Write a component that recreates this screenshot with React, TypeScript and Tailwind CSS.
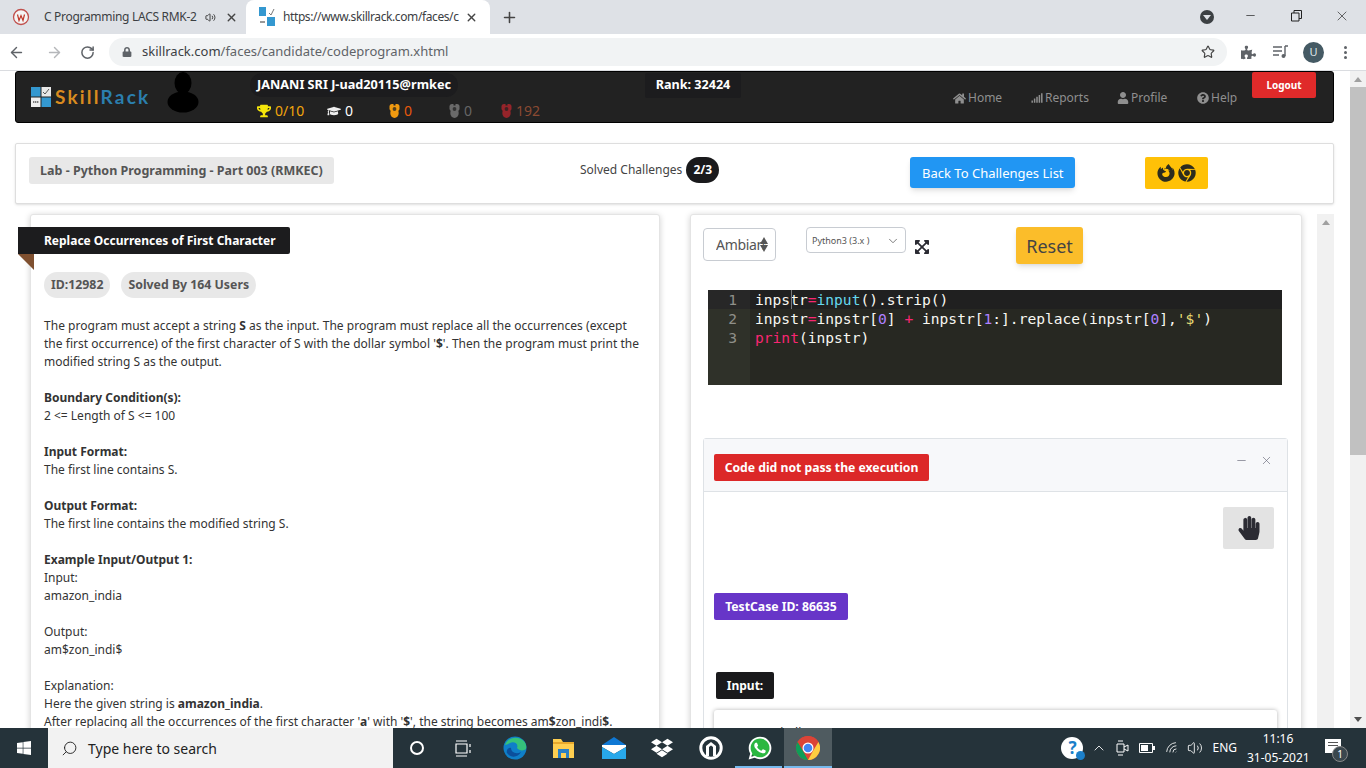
import React from "react";
import { FaHome, FaSignal, FaUser, FaQuestionCircle, FaTrophy, FaGraduationCap, FaFirefoxBrowser, FaChrome, FaExpandArrowsAlt, FaHandPaper, FaLock, FaPuzzlePiece, FaDropbox, FaWhatsapp, FaWindows } from "react-icons/fa";
import { ArrowLeft, ArrowRight, RotateCw, Star, X, Plus, Minus, Search, ChevronUp, ChevronDown, Wifi, Volume2 } from "lucide-react";

const sans = { fontFamily: '"Noto Sans", sans-serif' };

function Medal({ color }: { color: string }) {
  return (
    <svg width="11" height="14" viewBox="0 0 11 14" className="shrink-0">
      <rect x="0.5" y="0" width="10" height="7" rx="2.5" fill={color} />
      <ellipse cx="5.5" cy="9" rx="4.2" ry="5" fill={color} />
      <rect x="4.5" y="0" width="2" height="1.5" fill="#222" />
      <circle cx="5.5" cy="5" r="1.9" fill="#222" opacity=".75" />
    </svg>
  );
}

function Logo() {
  return (
    <svg width="20" height="20" viewBox="0 0 20 20" className="shrink-0">
      <rect width="9.5" height="9.5" fill="#3498d0" />
      <rect x="10.5" width="9.5" height="9.5" fill="#e8e8e8" />
      <path d="M12 5l2 2 4-5" stroke="#555" strokeWidth="1" fill="none" />
      <rect y="10.5" width="9.5" height="9.5" fill="#eee" />
      <path d="M2 15h6" stroke="#555" strokeWidth="1.4" strokeDasharray="1.4 .6" />
      <rect x="10.5" y="10.5" width="9.5" height="9.5" fill="#3498d0" />
    </svg>
  );
}

function ChromeTabs() {
  return (
    <div className="h-[34px] bg-[#dee1e6] flex items-end shrink-0" style={sans}>
      <div className="w-[246px] h-[34px] flex items-center pl-[12px] text-[12px] text-[#3c4043]">
        <svg width="18" height="18" viewBox="0 0 18 18" className="shrink-0">
          <circle cx="9" cy="9" r="7.5" fill="#f4f4f4" stroke="#c0504d" strokeWidth="1.3" />
          <path d="M5.5 6.5l1.5 6 2-5 2 5 1.5-6" stroke="#c0392b" strokeWidth="1.2" fill="none" />
        </svg>
        <span className="ml-[14px] w-[153px] tracking-[-0.3px] overflow-hidden whitespace-nowrap">C Programming LACS RMK-2</span>
        <Volume2 size={11} className="ml-[8px] text-[#333]" />
        <X size={13} strokeWidth={2.5} className="ml-[9px] text-[#444]" />
      </div>
      <div className="w-[244px] h-[34px] bg-white rounded-t-[8px] flex items-center pl-[13px] text-[12px] text-[#3c4043]">
        <svg width="16" height="20" viewBox="0 0 16 20" className="shrink-0">
          <rect x="0" y="0" width="7" height="9" fill="#3498d0" />
          <path d="M10 6l2 2 3-6" stroke="#777" strokeWidth="1" fill="none" />
          <rect x="8" y="10" width="8" height="9" fill="#3498d0" />
          <path d="M1 15h5" stroke="#555" strokeWidth="1.2" />
        </svg>
        <span className="ml-[8px] w-[178px] tracking-[-0.4px] overflow-hidden whitespace-nowrap">https://www.skillrack.com/faces/c</span>
        <X size={13} strokeWidth={2.5} className="ml-[4px] text-[#444]" />
      </div>
      <div className="h-[34px] flex items-center ml-[11px]">
        <Plus size={17} strokeWidth={2.2} className="text-[#444]" />
      </div>
      <div className="flex-1" />
      <div className="h-[34px] flex items-center">
        <span className="w-[14px] h-[14px] rounded-full bg-[#3c4043] flex items-center justify-center">
          <span className="w-0 h-0 border-l-[4px] border-r-[4px] border-t-[5px] border-l-transparent border-r-transparent border-t-[#dee1e6]" />
        </span>
      </div>
      <div className="h-[34px] w-[152px] flex items-center pl-[30px] pb-[3px]">
        <Minus size={13} strokeWidth={1.3} className="text-[#222]" />
        <svg width="11" height="12" viewBox="0 0 11 12" className="ml-[34px]">
          <path d="M.5 3h7.5v8H.5zM3 3V.5h7.5v8H8" stroke="#222" fill="none" />
        </svg>
        <X size={16} strokeWidth={1} className="ml-[32px] text-[#222]" />
      </div>
    </div>
  );
}

function Toolbar() {
  return (
    <div className="h-[37px] bg-white flex items-center shrink-0 border-b border-[#dadce0]" style={sans}>
      <ArrowLeft size={17} strokeWidth={2} className="ml-[8px] text-[#5f6368]" />
      <ArrowRight size={17} strokeWidth={2} className="ml-[21px] text-[#b5b7ba]" />
      <RotateCw size={15} strokeWidth={2.4} className="ml-[17px] text-[#5f6368]" />
      <div className="ml-[14px] w-[1118px] h-[28px] mb-[1px] rounded-full bg-[#f1f3f4] flex items-center pl-[13px] pr-[10px] text-[13px] text-[#3c4043]">
        <FaLock size={10} className="text-[#5f6368]" />
        <span className="ml-[10px]">skillrack.com<span className="text-[#5f6368]">/faces/candidate/codeprogram.xhtml</span></span>
        <span className="flex-1" />
        <Star size={14} className="text-[#444] mr-[2px]" />
      </div>
      <FaPuzzlePiece size={15} className="ml-[14px] text-[#5f6368]" />
      <svg width="16" height="14" viewBox="0 0 16 14" className="ml-[17px]">
        <path d="M0 2h9M0 6h9M0 10h6" stroke="#5f6368" strokeWidth="1.3" />
        <path d="M12 1h3M12 1v10" stroke="#5f6368" strokeWidth="1.4" fill="none" />
        <circle cx="10.5" cy="11" r="2" fill="#5f6368" />
      </svg>
      <span className="ml-[14px] w-[21px] h-[21px] rounded-full bg-[#455a64] text-[#dfe6ea] text-[11px] flex items-center justify-center">U</span>
      <span className="ml-[20px] flex flex-col gap-[2px]">
        <span className="w-[3px] h-[3px] rounded-full bg-[#5f6368]" />
        <span className="w-[3px] h-[3px] rounded-full bg-[#5f6368]" />
        <span className="w-[3px] h-[3px] rounded-full bg-[#5f6368]" />
      </span>
    </div>
  );
}

function NavBar() {
  const stat = "flex items-center gap-[4px] text-[14px] leading-[18px]";
  const link = "flex items-center gap-[2px] text-[12px] text-[#8f8f8f]";
  return (
    <div className="ml-[15px] w-[1319px] h-[52px] bg-[#222222] rounded-[3px] border border-black flex items-start">
      <div className="w-[140px] h-full flex items-center pl-[15px]">
        <Logo />
        <span className="ml-[4px] text-[19px] font-bold tracking-[2.2px] whitespace-nowrap" style={{ fontFamily: '"Lato", sans-serif' }}>
          <span className="text-[#d98b1f]">Skill</span><span className="text-[#2b7fae]">Rack</span>
        </span>
      </div>
      <svg width="32" height="41" viewBox="0 0 32 41" className="mt-0 ml-[11px] shrink-0">
        <ellipse cx="16" cy="11" rx="8.5" ry="11" fill="#000" />
        <ellipse cx="16" cy="30" rx="15.5" ry="10.5" fill="#000" />
      </svg>
      <div className="ml-[51px] w-[348px] pt-px">
        <div className="w-[208px] h-[24px] bg-[#1c1c1e] rounded-full pl-[7px] flex items-center text-[12.7px] font-bold text-white whitespace-nowrap">JANANI SRI J-uad20115@rmkec</div>
        <div className="flex items-center h-[18px] mt-[5px] pl-[7px]">
          <div className={`${stat} w-[70px] text-[#f2a60c]`}><FaTrophy size={14} className="text-[#f5e60a]" />0/10</div>
          <div className={`${stat} w-[62px] text-white`}><FaGraduationCap size={14} className="text-[#eee]" />0</div>
          <div className={`${stat} w-[60px] text-[#e8590c]`}><Medal color="#f09a10" />0</div>
          <div className={`${stat} w-[52px] text-[#666]`}><Medal color="#6a6a6a" />0</div>
          <div className={`${stat} text-[#8a4a32]`}><Medal color="#96242a" />192</div>
        </div>
      </div>
      <div className="mt-px ml-[47px] w-[96px] h-[25px] bg-[#1c1c1e] rounded-[2px] flex items-center justify-center text-[12.6px] font-bold text-white whitespace-nowrap">Rank: 32424</div>
      <div className="ml-[212px] mt-[17px] w-[299px] flex items-center h-[18px]">
        <div className={`${link} w-[78px]`}><FaHome size={13} />Home</div>
        <div className={`${link} w-[86px]`}><FaSignal size={12} />Reports</div>
        <div className={`${link} w-[80px]`}><FaUser size={12} />Profile</div>
        <div className={link}><FaQuestionCircle size={12} />Help</div>
      </div>
      <div className="w-[64px] h-[26px] mt-0 bg-[#e02a2a] rounded-[2px] flex items-center justify-center text-[10px] font-bold text-white">Logout</div>
    </div>
  );
}

function TopCard() {
  return (
    <div className="mt-[20px] ml-[15px] w-[1319px] h-[61px] bg-white border border-[#dedede] rounded-[2px] shadow-sm flex items-start pt-[13px] pl-[13px]">
      <div className="w-[305px] h-[27px] pt-px bg-[#e8e8e8] rounded-[3px] flex items-center pl-[11px] text-[12.5px] font-bold text-[#555] whitespace-nowrap">Lab - Python Programming - Part 003 (RMKEC)</div>
      <div className="ml-[246px] h-[26px] flex items-center text-[12px] text-[#444] whitespace-nowrap">Solved Challenges</div>
      <div className="ml-[4px] w-[33px] h-[26px] rounded-full bg-[#1a1a1c] text-white text-[12px] font-bold flex items-center justify-center">2/3</div>
      <div className="ml-[191px] w-[165px] h-[31px] pt-[2px] bg-[#2196f3] rounded-[3px] shadow-md flex items-center justify-center text-[13px] text-white whitespace-nowrap">Back To Challenges List</div>
      <div className="ml-[70px] w-[63px] h-[32px] bg-[#ffc107] rounded-[2px] flex items-center justify-center gap-[3px] text-[#2c2c1e]">
        <FaFirefoxBrowser size={18} /><FaChrome size={18} />
      </div>
    </div>
  );
}

function LeftPanel() {
  return (
    <div className="relative ml-[30px] w-[630px] h-[560px] bg-white border border-[#e4e4e4] rounded-t-[3px] shadow-[0_1px_6px_rgba(0,0,0,0.18)] shrink-0">
      <div className="absolute left-[-13px] top-[12px] w-[272px] h-[27px] pt-px bg-[#1c1c1e] rounded-r-[2px] flex items-center pl-[26px] text-[12px] font-bold text-white whitespace-nowrap">Replace Occurrences of First Character</div>
      <div className="absolute left-[-13px] top-[39px] w-0 h-0 border-r-[16px] border-b-[16px] border-r-[#7f5030] border-b-transparent" />
      <div className="pt-[57px] pl-[13px] flex gap-[11px]">
        <span className="h-[26px] px-[7px] pt-px rounded-full bg-[#e8e8e8] flex items-center text-[12.3px] font-bold text-[#555]">ID:12982</span>
        <span className="h-[26px] px-[7px] pt-px rounded-full bg-[#e8e8e8] flex items-center text-[12.3px] font-bold text-[#555]">Solved By 164 Users</span>
      </div>
      <div className="mt-[19px] pl-[13px] text-[12px] leading-[18px] text-[#333] whitespace-nowrap">
        <p className="tracking-[0.034px]">The program must accept a string <b>S</b> as the input. The program must replace all the occurrences (except</p>
        <p className="tracking-[0.03px]">the first occurrence) of the first character of S with the dollar symbol '<b>$</b>'. Then the program must print the</p>
        <p>modified string S as the output.</p>
        <br />
        <b>Boundary Condition(s):</b><br />2 &lt;= Length of S &lt;= 100<br /><br />
        <b>Input Format:</b><br />The first line contains S.<br /><br />
        <b>Output Format:</b><br />The first line contains the modified string S.<br /><br />
        <b>Example Input/Output 1:</b><br />Input:<br />amazon_india<br /><br />Output:<br />am$zon_indi$<br /><br />Explanation:<br />
        Here the given string is <b>amazon_india</b>.<br />
        After replacing all the occurrences of the first character '<b>a</b>' with '<b>$</b>', the string becomes am<b>$</b>zon_indi<b>$</b>.
      </div>
    </div>
  );
}

const cw = "text-[#f8f8f2]";
function CodeBox() {
  const nums = ["1", "2", "3"];
  return (
    <div className="ml-[17px] w-[574px] h-[95px] bg-[#272822] flex text-[14.6px] leading-[19px]" style={{ fontFamily: '"DejaVu Sans Mono", monospace' }}>
      <div className="w-[42px] bg-[#2f3129] text-[#8f908a] text-right pr-[13px]">
        {nums.map((n, i) => (
          <div key={n} className={i === 0 ? "bg-[#272727] -mr-[13px] pr-[13px] h-[19px]" : "h-[19px]"}>{n}</div>
        ))}
      </div>
      <div className={`flex-1 pl-[5px] whitespace-pre ${cw}`}>
        <div className="relative bg-[#202020] -ml-[5px] pl-[5px] h-[19px]">
          inpstr<span className="text-[#f92672]">=</span><span className="text-[#66d9ef]">input</span>().strip()
          <span className="absolute left-[41px] top-0 w-px h-[19px] bg-[#777]" />
        </div>
        <div className="h-[19px]">inpstr<span className="text-[#f92672]">=</span>inpstr[<span className="text-[#ae81ff]">0</span>] <span className="text-[#f92672]">+</span> inpstr[<span className="text-[#ae81ff]">1</span>:].replace(inpstr[<span className="text-[#ae81ff]">0</span>],<span className="text-[#e6db74]">'$'</span>)</div>
        <div className="h-[19px]"><span className="text-[#f92672]">print</span>(inpstr)</div>
      </div>
    </div>
  );
}

function RightPanel() {
  return (
    <div className="ml-[30px] w-[612px] h-[560px] bg-white border border-[#e4e4e4] rounded-t-[3px] shadow-[0_1px_6px_rgba(0,0,0,0.18)] shrink-0 overflow-hidden">
      <div className="flex items-start pt-[12px] pl-[12px] h-[75px]">
        <div className="relative w-[73px] h-[33px] mt-px border border-[#c8ccd2] rounded-[4px] flex items-center pl-[12px] text-[14px] text-[#555] whitespace-nowrap">
          <span className="w-[50px] overflow-hidden tracking-[-0.3px]">Ambiance</span>
          <span className="absolute right-[7px] top-[8px] flex flex-col gap-px">
            <span className="w-0 h-0 border-l-[4px] border-r-[4px] border-b-[7px] border-l-transparent border-r-transparent border-b-[#555]" />
            <span className="w-0 h-0 border-l-[4px] border-r-[4px] border-t-[7px] border-l-transparent border-r-transparent border-t-[#555]" />
          </span>
        </div>
        <div className="ml-[30px] w-[100px] h-[26px] pt-px border border-[#c8ccd2] rounded-[4px] flex items-center pl-[5px] pr-[5px] text-[9px] text-[#555]">
          <span className="flex-1">Python3 (3.x )</span><ChevronDown size={14} strokeWidth={1.3} />
        </div>
        <FaExpandArrowsAlt size={16} className="ml-[8px] mt-[12px] text-[#2b2b33]" />
        <div className="ml-[86px] w-[67px] h-[37px] pt-px bg-[#fbbd2a] rounded-[3px] shadow-md flex items-center justify-center text-[18px] text-[#444]">Reset</div>
      </div>
      <CodeBox />
      <div className="ml-[12px] mt-[53px] w-[585px] h-[300px] border border-[#dee2e6] rounded-t-[3px]">
        <div className="h-[53px] bg-[#f7f8fa] border-b border-[#dee2e6] flex items-start pt-[15px] pl-[10px] pr-[14px]">
          <span className="w-[215px] h-[27px] pt-px bg-[#dc2828] rounded-[2px] flex items-center justify-center text-[12.2px] font-bold text-white whitespace-nowrap">Code did not pass the execution</span>
          <span className="flex-1" />
          <Minus size={13} strokeWidth={1.2} className="mt-0 text-[#667]" />
          <X size={13} strokeWidth={1.2} className="ml-[12px] text-[#667]" />
        </div>
        <div className="flex justify-end pr-[13px] pt-[15px]">
          <div className="w-[51px] h-[42px] bg-[#e3e3e3] rounded-[2px] flex items-center justify-center text-[#2b2b33]"><FaHandPaper size={24} /></div>
        </div>
        <div className="ml-[10px] mt-[44px] w-[134px] h-[27px] pt-px bg-[#6735c8] rounded-[2px] flex items-center justify-center text-[12.2px] font-bold text-white whitespace-nowrap">TestCase ID: 86635</div>
        <div className="ml-[12px] mt-[52px] w-[58px] h-[27px] bg-[#1a1a1c] rounded-[2px] flex items-center justify-center text-[12px] font-bold text-white">Input:</div>
        <div className="ml-[10px] mt-[11px] w-[563px] h-[60px] bg-white rounded-[3px] shadow-[0_0_4px_rgba(0,0,0,0.3)] pl-[16px] pt-[14px] text-[12px] text-[#222]">amazon_india</div>
      </div>
    </div>
  );
}

function Page() {
  return (
    <div className="flex-1 relative overflow-hidden flex bg-white min-h-0" style={sans}>
      <div className="w-[1350px] shrink-0">
        <NavBar />
        <TopCard />
        <div className="mt-[10px] flex items-start">
          <LeftPanel />
          <RightPanel />
          <div className="ml-[15px] w-[17px] h-[560px] bg-[#f1f1f1] flex justify-center pt-[6px] shrink-0">
            <span className="w-0 h-0 border-l-[4px] border-r-[4px] border-b-[5px] border-l-transparent border-r-transparent border-b-[#a0a0a0]" />
          </div>
        </div>
      </div>
      <div className="w-[16px] bg-[#f1f1f1] flex flex-col items-center">
        <span className="mt-[6px] w-0 h-0 border-l-[4px] border-r-[4px] border-b-[5px] border-l-transparent border-r-transparent border-b-[#a0a0a0]" />
        <span className="mt-[5px] w-full h-[368px] bg-[#c1c1c1]" />
        <span className="flex-1" />
        <span className="mb-[6px] w-0 h-0 border-l-[4px] border-r-[4px] border-t-[5px] border-l-transparent border-r-transparent border-t-[#505050]" />
      </div>
    </div>
  );
}

function Taskbar() {
  const c = "w-[49px] h-full flex items-center justify-center shrink-0";
  return (
    <div className="h-[40px] bg-[#25333a] flex items-center shrink-0 text-white" style={sans}>
      <div className="w-[48px] h-full flex items-center justify-center"><FaWindows size={16} /></div>
      <div className="w-[345px] h-full bg-[#f2f2f2] flex items-center pl-[13px] text-[#222] text-[14px]">
        <Search size={17} strokeWidth={1.3} className="-scale-x-100" />
        <span className="ml-[10px]">Type here to search</span>
      </div>
      <div className="ml-[1px] flex items-center h-full">
        <div className="w-[46px] h-full flex items-center justify-center"><span className="w-[14px] h-[14px] rounded-full border-2 border-white" /></div>
        <div className="w-[46px] h-full flex items-center justify-center">
          <svg width="17" height="17" viewBox="0 0 17 17"><path d="M1 1h11M1 16h11M1 4h11v9H1z M15 4v3M15 10v3" stroke="#fff" strokeWidth="1.2" fill="none" /></svg>
        </div>
        <div className={`${c} ml-[4px]`}>
          <svg width="24" height="24" viewBox="0 0 24 24">
            <circle cx="12" cy="12" r="11.5" fill="#0f7fc8" />
            <path d="M2 9C4 2 12 0 18 3c4 2 6 6 5 10-2 2-7 2-9-1 2-4-3-7-7-5-2 1-4 2-5 2z" fill="#35c27b" />
            <path d="M8 12c0 4 5 7 10 4-3 6-11 6-14 1-1-2 1-6 4-5z" fill="#0b4f9c" />
          </svg>
        </div>
        <div className={c}>
          <svg width="21" height="19" viewBox="0 0 21 19">
            <path d="M0 0h8l2 3h11v16H0z" fill="#ffcf50" />
            <path d="M0 3h21v2H0z" fill="#e8a92c" />
            <rect x="5" y="10" width="11" height="9" fill="#2a7fc4" />
            <rect x="8" y="14" width="5" height="5" fill="#ffcf50" />
          </svg>
        </div>
        <div className={`${c} ml-[1px]`}>
          <svg width="24" height="22" viewBox="0 0 24 22">
            <path d="M0 8L12 0l12 8z" fill="#0f78d4" />
            <path d="M0 8h24v2l-12 7L0 10z" fill="#fff" />
            <path d="M0 10l12 7 12-7v12H0z" fill="#28a8ea" />
          </svg>
        </div>
        <div className={`${c} -ml-px`}><FaDropbox size={22} /></div>
        <div className={c}>
          <svg width="24" height="24" viewBox="0 0 24 24">
            <circle cx="12" cy="12" r="10.2" fill="none" stroke="#fff" strokeWidth="3" />
            <path d="M7 20V10l5-4 5 4v10h-3V11l-2-1.5L10 11v9z" fill="#fff" />
          </svg>
        </div>
        <div className={`${c} relative`}>
          <span className="absolute left-[14px] top-[9px] w-[21px] h-[21px] rounded-full bg-[#2bb741]" />
          <FaWhatsapp size={26} className="relative text-white" />
          <span className="absolute left-0 right-[2px] bottom-0 h-[2px] bg-[#76b9ed]" />
        </div>
        <div className="relative w-[48px] h-full bg-[#4f5b60] flex items-center justify-center">
          <svg width="24" height="24" viewBox="0 0 24 24">
            <circle cx="12" cy="12" r="12" fill="#db4437" />
            <path d="M12 12L1.6 6A12 12 0 0 1 12 0h0a12 12 0 0 1 10.4 6H12z" fill="#db4437" />
            <path d="M12 24A12 12 0 0 1 1.6 6L7 15z" fill="#0f9d58" />
            <path d="M22.4 6A12 12 0 0 1 12 24l5-9z" fill="#ffcd40" />
            <circle cx="12" cy="12" r="5.5" fill="#fff" />
            <circle cx="12" cy="12" r="4.3" fill="#4285f4" />
          </svg>
          <span className="absolute left-0 right-0 bottom-0 h-[2px] bg-[#76b9ed]" />
        </div>
      </div>
      <div className="flex-1" />
      <div className="w-[22px] h-[22px] rounded-full bg-white flex items-center justify-center relative text-[#1c7fc9] text-[17px] font-bold">?
        <span className="absolute right-[-2px] bottom-[-1px] w-[9px] h-[9px] rounded-full bg-[#1c7fc9]" />
      </div>
      <ChevronUp size={16} strokeWidth={1.3} className="ml-[8px]" />
      <svg width="14" height="18" viewBox="0 0 14 18" className="ml-[9px]"><path d="M1 5h7v8H1zM8 8l4-2v6l-4-2M2 2h5M2 16h5" stroke="#fff" fill="none" /></svg>
      <svg width="16" height="10" viewBox="0 0 16 10" className="ml-[9px]"><path d="M.5.5h13v9H.5z" stroke="#fff" fill="none" /><path d="M2 2h7v6H2z" fill="#fff" /><path d="M14 3h2v4h-2z" fill="#fff" /></svg>
      <Wifi size={15} strokeWidth={1.3} className="ml-[10px] -rotate-45" />
      <Volume2 size={16} strokeWidth={1.3} className="ml-[7px]" />
      <span className="ml-[9px] text-[12px]">ENG</span>
      <div className="ml-[10px] w-[62px] text-center text-[12px] leading-[19px] whitespace-nowrap"><div>11:16</div><div>31-05-2021</div></div>
      <div className="ml-[16px] mr-[25px] relative w-[16px] h-[14px] mb-[4px] bg-white">
        <span className="absolute left-[3px] top-[3px] w-[10px] h-[1px] bg-[#555]" />
        <span className="absolute left-[3px] top-[6px] w-[10px] h-[1px] bg-[#555]" />
        <span className="absolute left-[7px] top-[7px] w-[16px] h-[16px] rounded-full bg-[#3a474e] border border-[#888] text-[10px] leading-[14px] text-center">1</span>
      </div>
    </div>
  );
}

export default function App() {
  return (
    <div className="w-[1366px] h-[768px] overflow-hidden flex flex-col bg-white">
      <ChromeTabs />
      <Toolbar />
      <Page />
      <Taskbar />
    </div>
  );
}
